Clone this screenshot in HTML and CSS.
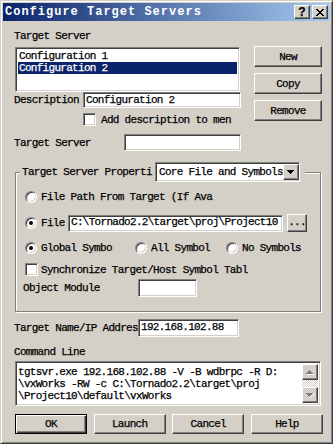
FILE: index.html
```html
<!DOCTYPE html>
<html>
<head>
<meta charset="utf-8">
<title>Configure Target Servers</title>
<link rel="stylesheet" href="styles.css">
</head>
<body>
<div class="window">
  <div class="titlebar">
    <span class="title">Configure Target Servers</span>
    <span class="caps">
      <span class="cap"><span class="q">?</span></span>
      <span class="cap"><svg width="8" height="7" viewBox="0 0 8 7"><path d="M0 0h2v1h-2zM6 0h2v1h-2zM1 1h2v1h-2zM5 1h2v1h-2zM2 2h4v1h-4zM3 3h2v1h-2zM2 4h4v1h-4zM1 5h2v1h-2zM5 5h2v1h-2zM0 6h2v1h-2zM6 6h2v1h-2z" fill="#000"/></svg></span>
    </span>
  </div>
  <div class="client">
    <div class="top">
      <div class="leftcol">
        <div class="lbl">Target Server</div>
        <div class="listbox sunken">
          <div class="item">Configuration 1</div>
          <div class="item sel">Configuration 2</div>
        </div>
        <div class="row h16">
          <span class="t w69">Description</span>
          <span class="field sunken w158">Configuration 2</span>
        </div>
        <div class="row h13 mt5">
          <span class="check sunken ml69"></span>
          <span class="t ml5 w133">Add description to men</span>
        </div>
        <div class="row h17 mt8">
          <span class="t w110">Target Server</span>
          <span class="field sunken w117"></span>
        </div>
      </div>
      <div class="rightcol">
        <span class="btn side">New</span>
        <span class="btn side">Copy</span>
        <span class="btn side">Remove</span>
      </div>
    </div>

    <div class="group">
      <div class="ghead">
        <span class="t w133">Target Server Properti</span>
        <span class="combo sunken">
          <span class="combo-text">Core File and Symbols</span>
          <span class="btn dd"><svg width="7" height="4" viewBox="0 0 7 4"><path d="M0 0h7v1h-7zM1 1h5v1h-5zM2 2h3v1h-3zM3 3h1v1h-1z" fill="#000"/></svg></span>
        </span>
      </div>
      <div class="row h12 mt9">
        <span class="radio"></span>
        <span class="t ml4 w177">File Path From Target (If Ava</span>
      </div>
      <div class="row h18 mt11">
        <span class="radio on"></span>
        <span class="t ml4 w26">File</span>
        <span class="field sunken path">C:\Tornado2.2\target\proj\Project10</span>
        <span class="btn dots">...</span>
      </div>
      <div class="row h12 mt10">
        <span class="radio on"></span>
        <span class="t ml4 w72">Global Symbo</span>
        <span class="radio ml22"></span>
        <span class="t ml4 w60">All Symbol</span>
        <span class="radio ml15"></span>
        <span class="t ml4 w60">No Symbols</span>
      </div>
      <div class="row h13 mt9">
        <span class="check sunken"></span>
        <span class="t ml3 w209">Synchronize Target/Host Symbol Tabl</span>
      </div>
      <div class="row h18 mt3">
        <span class="t mln2 w115">Object Module</span>
        <span class="field sunken w59"></span>
      </div>
    </div>

    <div class="row h18 mt7">
      <span class="t w124">Target Name/IP Addres</span>
      <span class="field sunken w101">192.168.102.88</span>
    </div>
    <div class="lbl mt9">Command Line</div>
    <div class="cmd sunken">
      <div class="cmd-text">tgtsvr.exe 192.168.102.88 -V -B wdbrpc -R D:<br>\vxWorks -RW -c C:\Tornado2.2\target\proj<br>\Project10\default\vxWorks</div>
      <div class="vscroll">
        <span class="btn sb"><svg width="8" height="5" viewBox="0 0 8 5"><path d="M4 1h1v1h-1zM5 2h1v1h-1zM6 3h1v1h-1zM1 4h7v1h-7z" fill="#fff"/><path d="M3 0h1v1h-1zM2 1h3v1h-3zM1 2h5v1h-5zM0 3h7v1h-7z" fill="#808080"/></svg></span>
        <span class="track"></span>
        <span class="btn sb"><svg width="8" height="5" viewBox="0 0 8 5"><path d="M1 1h7v1h-7zM7 0h1v1h-1zM5 2h1v1h-1zM4 3h1v1h-1zM3 4h1v1h-1z" fill="#fff"/><path d="M0 0h7v1h-7zM1 1h5v1h-5zM2 2h3v1h-3zM3 3h1v1h-1z" fill="#808080"/></svg></span>
      </div>
    </div>
    <div class="bottom">
      <span class="btn bb default">OK</span>
      <span class="btn bb">Launch</span>
      <span class="btn bb">Cancel</span>
      <span class="btn bb">Help</span>
    </div>
  </div>
</div>
</body>
</html>
```
FILE: styles.css
```css
html, body {
  margin: 0;
  padding: 0;
}
body {
  font-family: "Liberation Mono", "DejaVu Sans Mono", monospace;
  font-size: 11px;
  letter-spacing: -0.7px;
  line-height: 12px;
  color: #000;
  background: #d4d0c8;
  -webkit-text-stroke-width: 0.25px;
}

.window {
  width: 333px;
  height: 444px;
  box-sizing: border-box;
  border: 1px solid;
  border-color: #d4d0c8 #404040 #404040 #d4d0c8;
  box-shadow: inset 1px 1px #fff, inset -1px -1px #808080;
  padding: 2px;
  background: #d4d0c8;
}

/* title bar */
.titlebar {
  height: 18px;
  display: flex;
  align-items: center;
  justify-content: space-between;
  background: linear-gradient(to right, #0a246a, #a6caf0);
  padding: 0 2px 0 2px;
}
.title {
  flex: none;
  color: #fff;
  font-family: "Liberation Mono", "DejaVu Sans Mono", monospace;
  font-weight: bold;
  font-size: 12px;
  letter-spacing: 1px;
  white-space: nowrap;
  -webkit-text-stroke-width: 0;
}
.caps {
  display: flex;
  gap: 2px;
}
.cap {
  width: 16px;
  height: 14px;
  box-sizing: border-box;
  border: 1px solid;
  border-color: #fff #404040 #404040 #fff;
  box-shadow: inset -1px -1px #808080, inset 1px 1px #d4d0c8;
  background: #d4d0c8;
  display: flex;
  align-items: center;
  justify-content: center;
}
.q {
  font-weight: bold;
  font-size: 12px;
  letter-spacing: 0;
  line-height: 12px;
  font-family: "Liberation Sans", Arial, sans-serif;
}

/* client */
.client {
  padding: 9px 0 0 11px;
}
.top {
  display: flex;
}
.leftcol {
  width: 227px;
}
.rightcol {
  margin-left: 13px;
  padding-top: 16px;
  width: 68px;
  display: flex;
  flex-direction: column;
  gap: 6px;
}
.lbl {
  height: 12px;
  white-space: nowrap;
}

/* generic bits */
.row {
  display: flex;
  align-items: center;
}
.t {
  display: block;
  flex: none;
  white-space: nowrap;
  overflow: hidden;
}
.sunken {
  box-sizing: border-box;
  border: 1px solid;
  border-color: #808080 #fff #fff #808080;
  box-shadow: inset 1px 1px #404040, inset -1px -1px #d4d0c8;
  background: #fff;
}
.btn {
  box-sizing: border-box;
  border: 1px solid;
  border-color: #fff #404040 #404040 #fff;
  box-shadow: inset -1px -1px #808080, inset 1px 1px #d4d0c8;
  background: #d4d0c8;
  display: flex;
  align-items: center;
  justify-content: center;
  flex: none;
  white-space: nowrap;
}
.btn.default {
  border: 1px solid #000;
  box-shadow: inset 1px 1px #fff, inset -1px -1px #404040, inset -2px -2px #808080;
}
.side {
  height: 21px;
}

.field {
  display: block;
  flex: none;
  align-self: stretch;
  padding: 0 0 0 2px;
  white-space: nowrap;
  overflow: hidden;
  line-height: 14px;
}
.check {
  display: block;
  flex: none;
  width: 13px;
  height: 13px;
}
.radio {
  display: block;
  flex: none;
  position: relative;
  width: 12px;
  height: 12px;
  box-sizing: border-box;
  border-radius: 50%;
  border: 1px solid;
  border-color: #808080 #fff #fff #808080;
  box-shadow: inset 1px 1px #404040, inset -1px -1px #d4d0c8;
  background: #fff;
}
.radio.on::after {
  content: "";
  position: absolute;
  left: 3px;
  top: 3px;
  width: 4px;
  height: 4px;
  border-radius: 50%;
  background: #000;
}

/* list box */
.listbox {
  margin-top: 5px;
  margin-left: 1px;
  width: 225px;
  height: 45px;
  padding: 2px;
}
.item {
  height: 12px;
  padding-left: 1px;
  white-space: nowrap;
}
.item.sel {
  background: #0a246a;
  color: #fff;
}

/* heights / widths / margins */
.h12 { height: 12px; }
.h13 { height: 13px; }
.h16 { height: 16px; }
.h17 { height: 17px; }
.h18 { height: 18px; }
.mt3 { margin-top: 3px; }
.mt5 { margin-top: 5px; }
.mt7 { margin-top: 7px; }
.mt8 { margin-top: 8px; }
.mt9 { margin-top: 9px; }
.mt10 { margin-top: 10px; }
.mt11 { margin-top: 11px; }
.ml3 { margin-left: 3px; }
.ml4 { margin-left: 4px; }
.ml5 { margin-left: 5px; }
.ml15 { margin-left: 15px; }
.ml22 { margin-left: 22px; }
.ml69 { margin-left: 69px; }
.mln2 { margin-left: -2px; }
.w26 { width: 26px; }
.w59 { width: 59px; }
.w60 { width: 60px; }
.w69 { width: 69px; }
.w72 { width: 72px; }
.w101 { width: 101px; }
.w110 { width: 110px; }
.w115 { width: 115px; }
.w117 { width: 117px; }
.w124 { width: 124px; }
.w133 { width: 133px; }
.w158 { width: 158px; }
.w177 { width: 177px; }
.w209 { width: 209px; }

/* group box */
.group {
  margin-top: 21px;
  margin-left: 1px;
  width: 306px;
  box-sizing: border-box;
  border: 1px solid #808080;
  box-shadow: inset 1px 1px #fff, 1px 1px #fff;
  padding: 0 0 14px 9px;
}
.ghead {
  margin-top: -11px;
  margin-left: -5px;
  padding: 0 5px 0 2px;
  width: fit-content;
  height: 20px;
  display: flex;
  align-items: center;
  background: #d4d0c8;
}
.combo {
  display: flex;
  align-items: center;
  width: 145px;
  height: 20px;
  padding: 2px;
}
.combo-text {
  flex: 1;
  padding-left: 1px;
  white-space: nowrap;
}
.dd {
  width: 16px;
  height: 16px;
}
.path {
  margin-left: 1px;
  width: 215px;
  height: 17px;
  align-self: center;
  line-height: 13px;
}
.dots {
  margin-left: 4px;
  width: 20px;
  height: 18px;
  padding-bottom: 3px;
}

/* command line */
.cmd {
  margin-top: 3px;
  margin-left: 1px;
  width: 306px;
  height: 45px;
  padding: 2px;
  display: flex;
}
.cmd-text {
  flex: 1;
  padding-top: 2px;
  white-space: nowrap;
  overflow: hidden;
}
.vscroll {
  width: 16px;
  display: flex;
  flex-direction: column;
}
.sb {
  width: 16px;
  height: 16px;
}
.track {
  flex: 1;
  background: repeating-conic-gradient(#fff 0 25%, #d4d0c8 0 50%) 0 0 / 2px 2px;
}

/* bottom buttons */
.bottom {
  margin-top: 8px;
  margin-left: 1px;
  width: 308px;
  display: flex;
  justify-content: space-between;
}
.bb {
  width: 72px;
  height: 20px;
}
```
